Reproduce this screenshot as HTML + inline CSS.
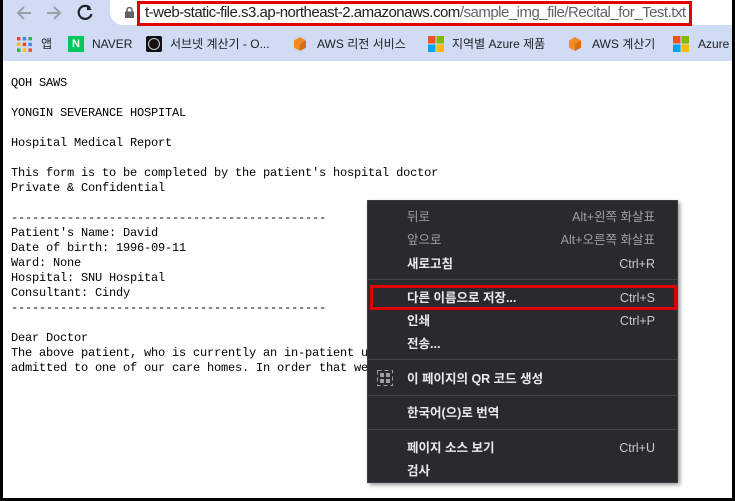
<!DOCTYPE html>
<html><head><meta charset="utf-8"><style>
*{margin:0;padding:0;box-sizing:border-box}
body{width:735px;height:501px;overflow:hidden;background:#000;position:relative;font-family:"Liberation Sans","Noto Sans CJK KR",sans-serif}
#win{position:absolute;left:3px;top:0;width:729px;height:498px;background:#fff;overflow:hidden}
#bar{position:absolute;left:0;top:0;width:100%;height:61px;background:#cfdcf3}
#url{position:absolute;left:107px;top:0;width:640px;height:25px;background:#fff;border-radius:0 0 0 13px}
#red1{position:absolute;left:134px;top:1px;width:555px;height:25px;border:3px solid #e00000}
.ut{position:absolute;left:142px;top:4px;font-size:15px;color:#202124;letter-spacing:-0.5px;white-space:nowrap}
.ut span{color:#5f6368}
.bm{position:absolute;top:36px;font-size:12px;line-height:16px;color:#202124;white-space:nowrap}
.ic{position:absolute;top:36px;width:16px;height:16px}
pre{position:absolute;left:8px;top:76px;font-family:"Liberation Mono",monospace;font-size:12px;line-height:15px;letter-spacing:-0.2px;color:#000}
#menu{position:absolute;left:364px;top:200px;width:311px;height:283px;background:#292a2d;border:1px solid #3c3d40;box-shadow:2px 2px 4px rgba(0,0,0,.4);color:#e8eaed;font-size:12.5px;line-height:16px}
.it{position:absolute;left:39px;white-space:nowrap;font-weight:bold}
.sc{position:absolute;right:22px;white-space:nowrap;color:#c8cacd}
.dim{color:#9aa0a6;font-weight:normal}
.sep{position:absolute;left:0;width:100%;height:1px;background:#45464a}
#red2{position:absolute;left:2px;top:84px;width:307px;height:25px;border:3px solid #e00000}
</style></head><body>
<div id="win">
<div id="bar">
<svg style="position:absolute;left:12px;top:4px" width="80" height="18" viewBox="0 0 80 18">
<path d="M16 9H4M9 3L3 9l6 6" stroke="#9aa0a6" stroke-width="2" fill="none"/>
<path d="M32 9h12M39 3l6 6-6 6" stroke="#9aa0a6" stroke-width="2" fill="none"/>
<path d="M79 4a6.5 6.5 0 1 0 1.5 6" stroke="#202124" stroke-width="2.2" fill="none" transform="translate(-4,0)"/>
<path d="M72 1v5h5z" fill="#202124"/>
</svg>
<div id="url"></div>
<svg style="position:absolute;left:122px;top:7px" width="9" height="11" viewBox="0 0 9 11"><rect x="0" y="4.5" width="9" height="6.5" fill="#5f6368"/><path d="M2 5V3a2.5 2.5 0 0 1 5 0v2" stroke="#5f6368" stroke-width="1.5" fill="none"/></svg>
<div class="ut">t-web-static-file.s3.ap-northeast-2.amazonaws.com<span>/sample_img_file/Recital_for_Test.txt</span></div>
<div id="red1"></div>
<svg class="ic" style="left:14px;top:37px" width="14" height="14" viewBox="0 0 14 14"><g><rect x="0" y="0" width="3" height="3" fill="#ea4335"/><rect x="5" y="0" width="3" height="3" fill="#4285f4"/><rect x="10" y="0" width="3" height="3" fill="#34a853"/><rect x="0" y="5" width="3" height="3" fill="#fbbc05"/><rect x="5" y="5" width="3" height="3" fill="#ea4335"/><rect x="10" y="5" width="3" height="3" fill="#4285f4"/><rect x="0" y="10" width="3" height="3" fill="#34a853"/><rect x="5" y="10" width="3" height="3" fill="#fbbc05"/><rect x="10" y="10" width="3" height="3" fill="#ea4335"/></g></svg>
<div class="bm" style="left:38px">앱</div>
<div class="ic" style="left:65px;background:#03c75a;color:#fff;font-size:11px;font-weight:bold;text-align:center;line-height:16px">N</div>
<div class="bm" style="left:89px">NAVER</div>
<div class="ic" style="left:143px;background:#111;border-radius:2px"><div style="margin:2px;width:12px;height:12px;border:1.5px solid #ccc;border-radius:50%"></div></div>
<div class="bm" style="left:167px">서브넷 계산기 - O...</div>
<svg class="ic" style="left:289px" viewBox="0 0 16 16"><path d="M8 1l6 3.5v7L8 15l-6-3.5v-7z" fill="#f08a24"/><path d="M8 8l6-3.5v7L8 15z" fill="#d86c10"/></svg>
<div class="bm" style="left:314px">AWS 리전 서비스</div>
<svg class="ic" style="left:425px" viewBox="0 0 16 16"><rect x="0" y="0" width="7.5" height="7.5" fill="#f25022"/><rect x="8.5" y="0" width="7.5" height="7.5" fill="#7fba00"/><rect x="0" y="8.5" width="7.5" height="7.5" fill="#00a4ef"/><rect x="8.5" y="8.5" width="7.5" height="7.5" fill="#ffb900"/></svg>
<div class="bm" style="left:449px">지역별 Azure 제품</div>
<svg class="ic" style="left:564px" viewBox="0 0 16 16"><path d="M8 1l6 3.5v7L8 15l-6-3.5v-7z" fill="#f08a24"/><path d="M8 8l6-3.5v7L8 15z" fill="#d86c10"/></svg>
<div class="bm" style="left:589px">AWS 계산기</div>
<svg class="ic" style="left:670px" viewBox="0 0 16 16"><rect x="0" y="0" width="7.5" height="7.5" fill="#f25022"/><rect x="8.5" y="0" width="7.5" height="7.5" fill="#7fba00"/><rect x="0" y="8.5" width="7.5" height="7.5" fill="#00a4ef"/><rect x="8.5" y="8.5" width="7.5" height="7.5" fill="#ffb900"/></svg>
<div class="bm" style="left:695px">Azure</div>
</div>
<pre>QOH SAWS

YONGIN SEVERANCE HOSPITAL

Hospital Medical Report

This form is to be completed by the patient's hospital doctor
Private &amp; Confidential

---------------------------------------------
Patient's Name: David
Date of birth: 1996-09-11
Ward: None
Hospital: SNU Hospital
Consultant: Cindy
---------------------------------------------

Dear Doctor
The above patient, who is currently an in-patient under your care, is to be
admitted to one of our care homes. In order that we can</pre>
<div id="menu">
<div class="it dim" style="top:8px">뒤로</div><div class="sc dim" style="top:8px;color:#9aa0a6">Alt+왼쪽 화살표</div>
<div class="it dim" style="top:31px">앞으로</div><div class="sc dim" style="top:31px;color:#9aa0a6">Alt+오른쪽 화살표</div>
<div class="it" style="top:55px">새로고침</div><div class="sc" style="top:55px">Ctrl+R</div>
<div class="sep" style="top:78px"></div>
<div class="it" style="top:89px">다른 이름으로 저장...</div><div class="sc" style="top:89px">Ctrl+S</div>
<div id="red2"></div>
<div class="it" style="top:112px">인쇄</div><div class="sc" style="top:112px">Ctrl+P</div>
<div class="it" style="top:135px">전송...</div>
<div class="sep" style="top:158px"></div>
<svg style="position:absolute;left:9px;top:169px" width="16" height="16" viewBox="0 0 16 16"><rect x="0.5" y="0.5" width="15" height="15" fill="none" stroke="#9aa0a6" stroke-dasharray="4 3"/><rect x="3" y="3" width="4" height="4" fill="#9aa0a6"/><rect x="9" y="3" width="4" height="4" fill="#9aa0a6"/><rect x="3" y="9" width="4" height="4" fill="#9aa0a6"/><rect x="9" y="9" width="4" height="4" fill="#9aa0a6"/></svg>
<div class="it" style="top:170px">이 페이지의 QR 코드 생성</div>
<div class="sep" style="top:194px"></div>
<div class="it" style="top:204px">한국어(으)로 번역</div>
<div class="sep" style="top:228px"></div>
<div class="it" style="top:239px">페이지 소스 보기</div><div class="sc" style="top:239px">Ctrl+U</div>
<div class="it" style="top:262px">검사</div>
</div>
</div>
</body></html>
